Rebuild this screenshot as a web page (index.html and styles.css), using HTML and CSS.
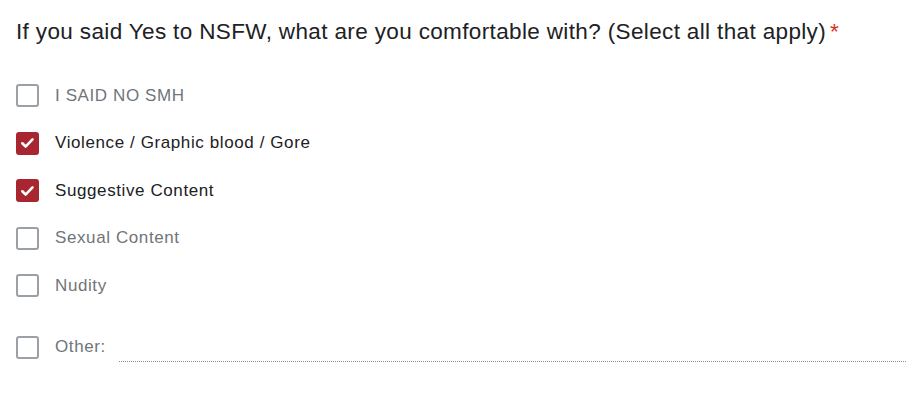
FILE: index.html
```html
<!DOCTYPE html>
<html>
<head>
<meta charset="utf-8">
<link rel="stylesheet" href="styles.css">
</head>
<body>
<div class="question">
  <div class="title">If you said Yes to NSFW, what are you comfortable with? (Select all that apply)<span class="req">*</span></div>
  <div class="options">
    <div class="opt"><span class="box"></span><span class="label">I SAID NO SMH</span></div>
    <div class="opt checked"><span class="box"><svg viewBox="0 0 22 22" width="22" height="22"><path d="M5 11.3l3.8 3.8 8-8.3" fill="none" stroke="#fff" stroke-width="3" stroke-linecap="round" stroke-linejoin="round"/></svg></span><span class="label">Violence / Graphic blood / Gore</span></div>
    <div class="opt checked"><span class="box"><svg viewBox="0 0 22 22" width="22" height="22"><path d="M5 11.3l3.8 3.8 8-8.3" fill="none" stroke="#fff" stroke-width="3" stroke-linecap="round" stroke-linejoin="round"/></svg></span><span class="label">Suggestive Content</span></div>
    <div class="opt"><span class="box"></span><span class="label">Sexual Content</span></div>
    <div class="opt"><span class="box"></span><span class="label">Nudity</span></div>
    <div class="opt other"><span class="box"></span><span class="label">Other:</span><span class="line"></span></div>
  </div>
</div>
</body>
</html>
```
FILE: styles.css
```css
html, body { margin: 0; padding: 0; background: #fff; }
body { font-family: "Liberation Sans", Arial, sans-serif; }
.question { padding: 17px 12px 0 16px; }
.title { font-size: 22.5px; color: #202124; line-height: 30px; letter-spacing: 0.36px; }
.req { color: #d93025; margin-left: 4px; }
.options { margin-top: 25px; display: flex; flex-direction: column; }
.opt { display: flex; align-items: center; height: 47.5px; }
.box { box-sizing: border-box; width: 23px; height: 23px; border: 2px solid #9aa0a6; border-radius: 3px; display: flex; align-items: center; justify-content: center; flex: none; }
.checked .box { background: #a8262f; border-color: #a8262f; }
.checked .box svg { display: block; }
.label { margin-left: 16px; font-size: 17px; color: #70757a; letter-spacing: 0.6px; }
.checked .label { color: #202124; }
.other { margin-top: 14px; }
.line { flex: 1; align-self: center; margin-left: 13px; margin-top: 28px; border-bottom: 1px dotted #8a8a8a; }
```
